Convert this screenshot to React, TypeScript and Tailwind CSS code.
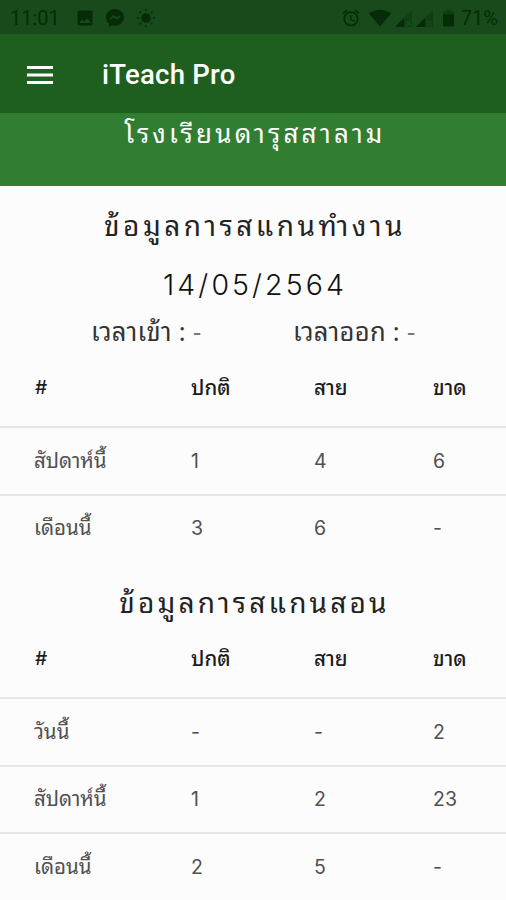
import { MdAlarm, MdImage } from "react-icons/md";

const thai = "font-['Noto_Sans_Thai_Looped','Noto_Looped_Thai','Loma','Garuda','Waree','Noto_Sans_Thai','Noto_Sans',sans-serif]";
const digits = "font-[Inter,sans-serif]";

type Row = [string, string, string, string];

const workRows: Row[] = [
  ["สัปดาห์นี้", "1", "4", "6"],
  ["เดือนนี้", "3", "6", "-"],
];

const teachRows: Row[] = [
  ["วันนี้", "-", "-", "2"],
  ["สัปดาห์นี้", "1", "2", "23"],
  ["เดือนนี้", "2", "5", "-"],
];

const columns = "grid grid-cols-[157px_123px_119px_1fr] items-center pl-[34px]";

function StatusBar() {
  return (
    <div className="flex h-[34px] shrink-0 items-center bg-[#184a1c] pl-[10px] pr-[8px] pt-[2px] text-[#062b09]">
      <span className="w-[65px] font-[Roboto] text-[20px] leading-none">11:01</span>
      <MdImage className="size-[20px]" />
      <svg className="ml-[10px] size-[20px]" viewBox="0 0 20 20">
        <path fill="currentColor" d="M10 1C5 1 1 4.600 1 9.300c0 2.500 1.100 4.700 3 6.200V19l3.100-1.700c.9.300 1.900.400 2.900.400 5 0 9-3.700 9-8.400S15 1 10 1Z" />
        <path d="m5 11.500 3.500-3.400 3 2.600L15 8" fill="none" stroke="#184a1c" strokeWidth="1.700" />
      </svg>
      <svg className="ml-[11px] size-[20px]" viewBox="0 0 20 20">
        <circle cx="10" cy="10" r="4.800" fill="currentColor" />
        <path d="M10 1v2M10 17v2M1 10h2M17 10h2M3.600 3.600 5 5M15 15l1.400 1.400M3.600 16.400 5 15M15 5l1.400-1.400" stroke="currentColor" strokeWidth="1.500" />
      </svg>
      <div className="ml-auto flex items-center">
        <MdAlarm className="size-[20px]" />
        <svg className="ml-[8px] h-[18px] w-[22px]" viewBox="0 0 22 18">
          <path d="M0 4.500Q11-3 22 4.500L11 17.500Z" fill="currentColor" />
        </svg>
        <Signal />
        <Signal />
        <svg className="ml-[10px] h-[18px] w-[11px]" viewBox="0 0 12 18">
          <path d="M3.500 0h5v2H12v16H0V2h3.500Z" fill="currentColor" opacity=".45" />
          <path d="M0 5h12v13H0Z" fill="currentColor" />
        </svg>
        <span className="ml-[7px] font-[Roboto] text-[20px] leading-none">71%</span>
      </div>
    </div>
  );
}

function Signal() {
  return (
    <svg className="ml-[4px] h-[17px] w-[17px]" viewBox="0 0 17 17">
      <path d="M17 0v17H0Z" fill="currentColor" opacity=".35" />
      <path d="M9 8v9H0Z" fill="currentColor" />
      <path d="m11 11 5 5m0-5-5 5" stroke="#184a1c" strokeWidth="1.500" />
    </svg>
  );
}

function Table({ rows }: { rows: Row[] }) {
  return (
    <div className="shrink-0 text-[20.500px] text-[#505050]">
      <div className={`${columns} h-[80px] border-b-2 border-[#e6e6e6] pb-[2px] font-medium text-[#1c1c1c]`}>
        <span className={`${digits} pl-px pt-[4px] text-[19px] font-medium`}>#</span>
        <span>ปกติ</span>
        <span>สาย</span>
        <span>ขาด</span>
      </div>
      {rows.map(([label, ...values]) => (
        <div key={label} className={`${columns} h-[67.500px] border-b-2 border-[#e6e6e6] pb-[3px] last:border-b-0 last:pb-[5px]`}>
          <span>{label}</span>
          {values.map((value, i) => (
            <span key={i} className={`${digits} pt-[4px] text-[19.500px]`}>{value}</span>
          ))}
        </div>
      ))}
    </div>
  );
}

export default function App() {
  return (
    <div className={`flex h-[900px] w-[506px] flex-col overflow-hidden bg-[#fcfcfc] ${thai}`}>
      <StatusBar />
      <header className="flex h-[79px] shrink-0 items-center bg-[#1e5f20] pl-[27px] pt-[2px] text-white">
        <svg className="h-[18px] w-[26px]" viewBox="0 0 26 18">
          <path d="M0 1.500h26M0 9h26M0 16.500h26" stroke="currentColor" strokeWidth="3" />
        </svg>
        <h1 className="ml-[49px] font-[Roboto] text-[27.500px] font-medium leading-none tracking-[0.250px]">iTeach Pro</h1>
      </header>
      <div className="flex h-[73px] shrink-0 justify-center bg-[#317d32] pl-[4px] text-[26px] leading-[37px] tracking-[3.200px] text-white">
        <span>โรงเรียนดารุสสาลาม</span>
      </div>
      <h2 className="mt-[14px] h-[48px] shrink-0 pl-[4px] text-center text-[28px] leading-[48px] tracking-[3.500px] text-[#222]">ข้อมูลการสแกนทำงาน</h2>
      <p className={`mt-[12px] h-[48px] shrink-0 pl-[4px] text-center text-[28.500px] font-light leading-[50px] tracking-[3.100px] text-[#111] ${digits}`}>14/05/2564</p>
      <div className="grid h-[40px] shrink-0 grid-cols-[202px_1fr] pl-[91px] text-[25.500px] leading-[44px] tracking-[0.300px] text-[#333]">
        <span>เวลาเข้า : <span className="text-[#777]">-</span></span>
        <span>เวลาออก : <span className="text-[#777]">-</span></span>
      </div>
      <Table rows={workRows} />
      <h2 className="mt-[16px] h-[40px] shrink-0 pl-[3px] text-center text-[28px] leading-[44px] tracking-[3.200px] text-[#222]">ข้อมูลการสแกนสอน</h2>
      <Table rows={teachRows} />
    </div>
  );
}
